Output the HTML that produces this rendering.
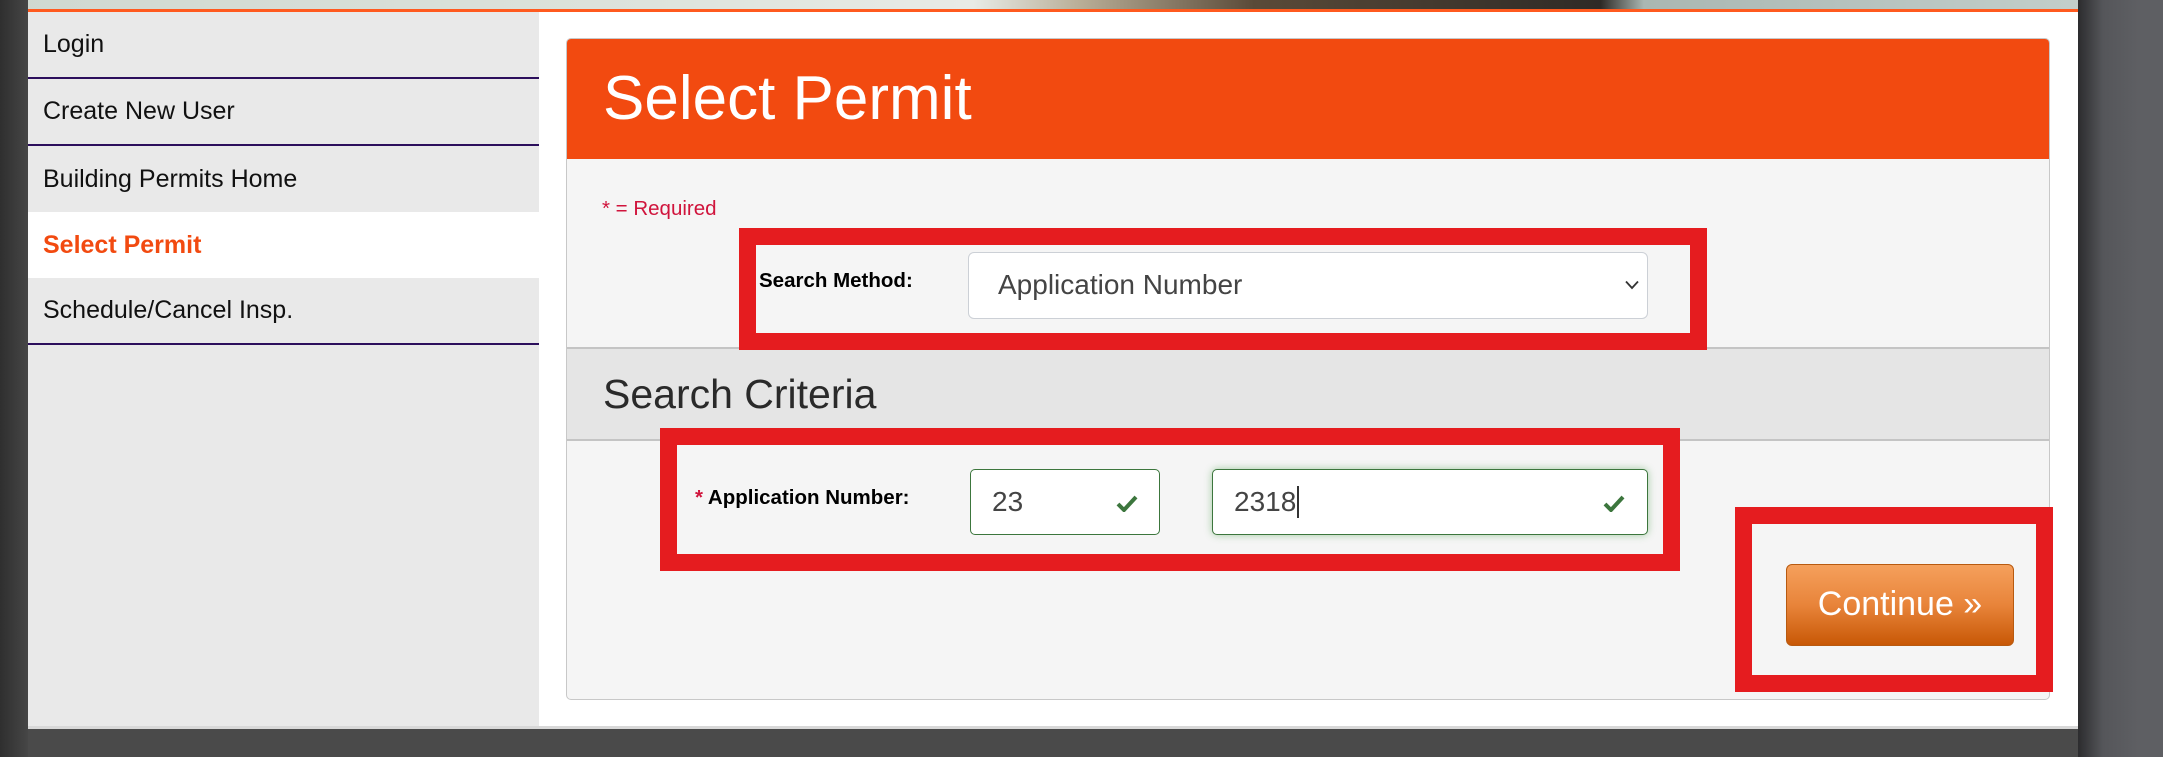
<!DOCTYPE html>
<html><head><meta charset="utf-8"><style>
*{margin:0;padding:0;box-sizing:border-box}
body{width:2163px;height:757px;position:relative;overflow:hidden;background:#fff;font-family:"Liberation Sans",Arial,sans-serif}
.a{position:absolute}
.nav{position:absolute;left:28px;width:511px;background:#e9e9e9;font-size:25px;color:#111;padding-left:15px;display:flex;align-items:center}
.bd{border-bottom:2px solid #2c0f5c}
.red{position:absolute;border:17px solid #e51c1f}
.lbl{position:absolute;font-weight:bold;font-size:20.5px;color:#000}
.inp{position:absolute;background:#fff;border:1.5px solid #3c763d;border-radius:5px;font-size:28px;color:#444;display:flex;align-items:center;padding-left:21px}
</style></head><body>
<div class="a" style="left:0;top:0;width:2163px;height:9px;background:linear-gradient(90deg,#cfd8d0 0%,#dde3dc 30%,#e8ebe6 45%,#b8ad96 50%,#5a4a38 58%,#2e2a26 74%,#aab7b2 76%,#c7d3cf 100%)"></div>
<div class="a" style="left:28px;top:9px;width:2050px;height:3px;background:#ff5a1f"></div>
<div class="a" style="left:0;top:0;width:28px;height:757px;background:linear-gradient(90deg,#2f2f2f,#464646)"></div>
<div class="a" style="left:2078px;top:0;width:85px;height:757px;background:linear-gradient(90deg,#2c2c2e 0px,#55565a 25px,#5e5f63 60px)"></div>
<div class="a" style="left:28px;top:726px;width:2050px;height:3px;background:#d8d8d8"></div>
<div class="a" style="left:28px;top:729px;width:2050px;height:28px;background:#4a4a4a"></div>
<div class="a" style="left:28px;top:12px;width:511px;height:714px;background:#e9e9e9"></div>
<div class="nav bd" style="top:12px;height:67px">Login</div>
<div class="nav bd" style="top:79px;height:67px">Create New User</div>
<div class="nav" style="top:146px;height:66px">Building Permits Home</div>
<div class="nav" style="top:212px;height:66px;background:#fff;color:#f24a10;font-weight:bold">Select Permit</div>
<div class="nav bd" style="top:278px;height:67px">Schedule/Cancel Insp.</div>

<div class="a" style="left:566px;top:38px;width:1484px;height:662px;background:#f5f5f5;border:1px solid #c8c8c8;border-radius:5px;overflow:hidden">
 <div class="a" style="left:0;top:0;width:1484px;height:120px;background:#f24a10;color:#fff;font-size:62px;padding-left:36px;line-height:120px">Select Permit</div>
 <div class="a" style="left:0;top:308px;width:1484px;height:94px;background:#e5e5e5;border-top:2px solid #c4c4c4;border-bottom:2px solid #c4c4c4;font-size:41px;color:#2a2a2a;padding-left:36px;line-height:90px">Search Criteria</div>
</div>
<div class="a" style="left:602px;top:197px;font-size:20.5px;color:#d0143c">* = Required</div>

<div class="red" style="left:739px;top:228px;width:968px;height:122px"></div>
<div class="lbl" style="left:759px;top:269px">Search Method:</div>
<div class="a" style="left:968px;top:252px;width:680px;height:67px;background:#fff;border:1.5px solid #ccd0d6;border-radius:6px;font-size:28px;color:#444;line-height:64px;padding-left:29px">Application Number
 <svg class="a" style="left:656px;top:27px" width="14" height="10" viewBox="0 0 14 10"><path d="M1 1.5L7 8L13 1.5" fill="none" stroke="#333" stroke-width="1.8"/></svg></div>

<div class="red" style="left:660px;top:428px;width:1020px;height:143px"></div>
<div class="lbl" style="left:695px;top:486px"><span style="color:#d0143c">*</span> Application Number:</div>
<div class="inp" style="left:970px;top:469px;width:190px;height:66px">23
 <svg class="a" style="left:145px;top:25px" width="22" height="17" viewBox="0 0 22 17"><path d="M2 9L8 15L20 2" fill="none" stroke="#3c763d" stroke-width="4"/></svg></div>
<div class="inp" style="left:1212px;top:469px;width:436px;height:66px;box-shadow:0 0 8px rgba(60,150,60,.45)">2318<span style="display:inline-block;width:2px;height:32px;background:#333;margin-left:1px"></span>
 <svg class="a" style="left:390px;top:25px" width="22" height="17" viewBox="0 0 22 17"><path d="M2 9L8 15L20 2" fill="none" stroke="#3c763d" stroke-width="4"/></svg></div>

<div class="red" style="left:1735px;top:507px;width:318px;height:185px"></div>
<div class="a" style="left:1786px;top:564px;width:228px;height:82px;border:1.5px solid #b85a10;border-radius:6px;background:linear-gradient(#f5a05c,#e8843a 50%,#c85806);color:#fff;font-size:34px;text-align:center;line-height:79px">Continue »</div>
</body></html>
